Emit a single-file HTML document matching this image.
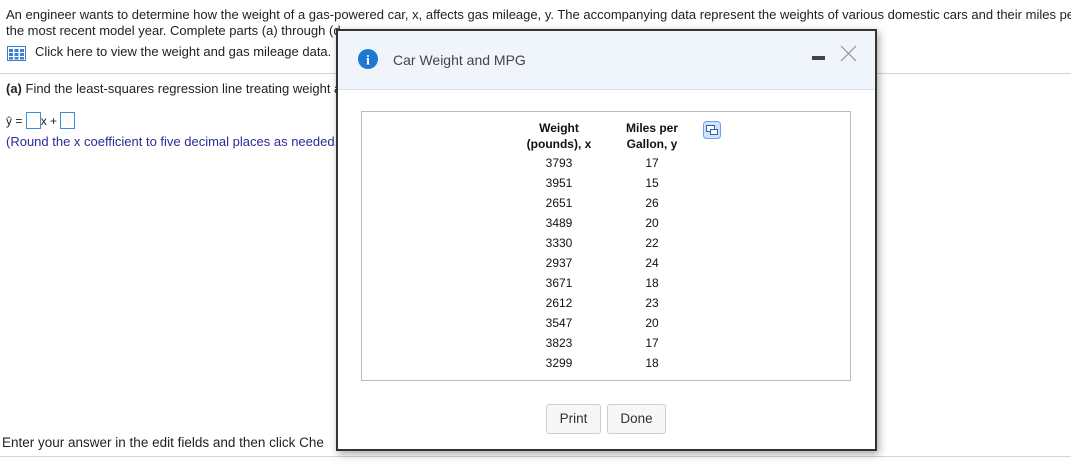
<!DOCTYPE html>
<html><head><style>
body{margin:0;width:1071px;height:462px;position:relative;overflow:hidden;background:#fff;font-family:"Liberation Sans",Arial,sans-serif;color:#222;}
.a{position:absolute;white-space:nowrap;font-size:13px;}
.hl{position:absolute;height:1px;background:#cdd5e0;}
.dlg{position:absolute;left:336px;top:29px;width:537px;height:418px;border:2px solid #333;background:#fff;box-shadow:2px 3px 8px rgba(0,0,0,.35);overflow:hidden;}
.hdr{position:absolute;left:0;top:0;right:0;height:58px;background:#f0f5fc;border-bottom:1px solid #cfe2f5;}
.tbl{position:absolute;left:23px;top:80px;width:488px;height:268px;border:1px solid #bbb;}
.c{position:absolute;width:100px;text-align:center;font-size:12px;color:#111;}
.btn{position:absolute;top:373px;height:28px;border:1px solid #ccc;border-radius:3px;background:#f7f7f7;font-size:13.5px;line-height:28px;text-align:center;color:#333;}
.box{display:inline-block;width:13px;height:15px;border:1px solid #3a8fd6;vertical-align:-4px;}
</style></head><body>
<div class="a" style="left:6px;top:7px">An engineer wants to determine how the weight of a gas-powered car, x, affects gas mileage, y. The accompanying data represent the weights of various domestic cars and their miles pe</div>
<div class="a" style="left:6px;top:23px">the most recent model year. Complete parts (a) through (d</div>
<svg style="position:absolute;left:7px;top:46px" width="20" height="16"><rect x="0.5" y="0.5" width="18" height="14" fill="#fff" stroke="#3a7fd0"/><g fill="#3a7fd0"><rect x="2" y="3" width="4" height="3"/><rect x="7.5" y="3" width="4" height="3"/><rect x="13" y="3" width="4" height="3"/><rect x="2" y="7" width="4" height="3"/><rect x="7.5" y="7" width="4" height="3"/><rect x="13" y="7" width="4" height="3"/><rect x="2" y="11" width="4" height="2.5"/><rect x="7.5" y="11" width="4" height="2.5"/><rect x="13" y="11" width="4" height="2.5"/></g></svg>
<div class="a" style="left:35px;top:44px">Click here to view the weight and gas mileage data.</div>
<div class="hl" style="left:0;top:73px;width:1071px"></div>
<div class="a" style="left:6px;top:81px"><b>(a)</b> Find the least-squares regression line treating weight a</div>
<div class="a" style="left:6px;top:112px;font-size:12px">ŷ = <span class="box"></span>x + <span class="box"></span></div>
<div class="a" style="left:6px;top:134px;color:#2b2b9a">(Round the x coefficient to five decimal places as needed.</div>
<div class="a" style="left:2px;top:435px;font-size:13.5px">Enter your answer in the edit fields and then click Che</div>
<div class="hl" style="left:0;top:456px;width:1071px"></div>
<div class="dlg">
<div class="hdr">
<svg style="position:absolute;left:20px;top:18px" width="20" height="20"><circle cx="10" cy="10" r="10" fill="#1c78d4"/><text x="10" y="15.5" text-anchor="middle" fill="#fff" font-size="14" font-weight="bold" font-family="Liberation Serif,serif">i</text></svg>
<div class="a" style="left:55px;top:21px;font-size:14px;color:#444">Car Weight and MPG</div>
<div style="position:absolute;left:474px;top:25px;width:13px;height:4px;background:#444"></div>
<svg style="position:absolute;left:502px;top:14px" width="17" height="17"><path d="M1 1L16 16M16 1L1 16" stroke="#888" stroke-width="1"/></svg>
</div>
<div class="tbl">
<div class="c" style="left:147px;top:8px;font-weight:bold;line-height:16px">Weight<br>(pounds), x</div>
<div class="c" style="left:240px;top:8px;font-weight:bold;line-height:16px">Miles per<br>Gallon, y</div>
<svg style="position:absolute;left:341px;top:9px" width="18" height="18"><rect x="0.5" y="0.5" width="17" height="17" rx="3" fill="#cfe1fb" stroke="#6ea3ea"/><rect x="3.5" y="4.5" width="8" height="6" fill="#fff" stroke="#2a5fb5"/><rect x="7.5" y="8.5" width="7" height="5" fill="#fff" stroke="#2a5fb5"/></svg>
<div class="c" style="left:147px;top:41px;line-height:20px">3793<br>3951<br>2651<br>3489<br>3330<br>2937<br>3671<br>2612<br>3547<br>3823<br>3299</div>
<div class="c" style="left:240px;top:41px;line-height:20px">17<br>15<br>26<br>20<br>22<br>24<br>18<br>23<br>20<br>17<br>18</div>
</div>
<div class="btn" style="left:208px;width:53px">Print</div>
<div class="btn" style="left:269px;width:57px">Done</div>
</div>
</body></html>
